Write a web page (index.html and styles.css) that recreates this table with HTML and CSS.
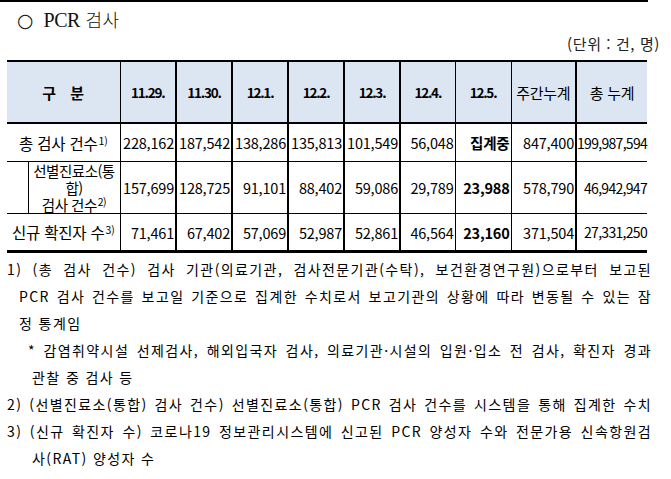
FILE: index.html
```html
<!DOCTYPE html>
<html lang="ko">
<head>
<meta charset="utf-8">
<link rel="stylesheet" href="styles.css">
</head>
<body>
<div class="page">
  <div class="topline"></div>
  <h1 class="title"><span class="circ">○</span><span class="en">PCR</span> <span class="ko">검사</span></h1>
  <div class="unit">(단위 : 건, 명)</div>
  <table class="tbl">
    <colgroup>
      <col class="w-sub"><col class="w-label">
      <col class="w-d"><col class="w-d"><col class="w-d"><col class="w-d"><col class="w-d">
      <col class="w-d5"><col class="w-d">
      <col class="w-wk"><col class="w-tot">
    </colgroup>
    <tr class="hdr">
      <th colspan="2" class="lbl">구 분</th>
      <th class="dt">11.29.</th>
      <th class="dt tk">11.30.</th>
      <th class="dt tk">12.1.</th>
      <th class="dt tk">12.2.</th>
      <th class="dt tk">12.3.</th>
      <th class="dt tk">12.4.</th>
      <th class="dt">12.5.</th>
      <th class="nm">주간누계</th>
      <th class="nm tk">총 누계</th>
    </tr>
    <tr class="r1">
      <td colspan="2" class="lab">총 검사 건수<sup>1)</sup></td>
      <td class="num">228,162</td>
      <td class="num tk">187,542</td>
      <td class="num tk">138,286</td>
      <td class="num tk">135,813</td>
      <td class="num tk">101,549</td>
      <td class="num tk">56,048</td>
      <td class="num b">집계중</td>
      <td class="num">847,400</td>
      <td class="num tk sq">199,987,594</td>
    </tr>
    <tr class="r2">
      <td class="sub"></td>
      <td class="lab ml">선별진료소(통<br>합)<br>검사 건수<sup>2)</sup></td>
      <td class="num">157,699</td>
      <td class="num tk">128,725</td>
      <td class="num tk">91,101</td>
      <td class="num tk">88,402</td>
      <td class="num tk">59,086</td>
      <td class="num tk">29,789</td>
      <td class="num b">23,988</td>
      <td class="num">578,790</td>
      <td class="num tk sq">46,942,947</td>
    </tr>
    <tr class="r3">
      <td colspan="2" class="lab">신규 확진자 수<sup>3)</sup></td>
      <td class="num">71,461</td>
      <td class="num tk">67,402</td>
      <td class="num tk">57,069</td>
      <td class="num tk">52,987</td>
      <td class="num tk">52,861</td>
      <td class="num tk">46,564</td>
      <td class="num b">23,160</td>
      <td class="num">371,504</td>
      <td class="num tk sq">27,331,250</td>
    </tr>
  </table>
  <div class="notes">
    <div class="ln j i0">1) (총 검사 건수) 검사 기관(의료기관, 검사전문기관(수탁), 보건환경연구원)으로부터 보고된</div>
    <div class="ln j i1">PCR 검사 건수를 보고일 기준으로 집계한 수치로서 보고기관의 상황에 따라 변동될 수 있는 잠</div>
    <div class="ln i1">정 통계임</div>
    <div class="ln j i2">* 감염취약시설 선제검사, 해외입국자 검사, 의료기관·시설의 입원·입소 전 검사, 확진자 경과</div>
    <div class="ln i3">관찰 중 검사 등</div>
    <div class="ln j i0">2) (선별진료소(통합) 검사 건수) 선별진료소(통합) PCR 검사 건수를 시스템을 통해 집계한 수치</div>
    <div class="ln j i0">3) (신규 확진자 수) 코로나19 정보관리시스템에 신고된 PCR 양성자 수와 전문가용 신속항원검</div>
    <div class="ln i3">사(RAT) 양성자 수</div>
  </div>
</div>
</body>
</html>
```
FILE: styles.css
```css
html, body {
  margin: 0;
  padding: 0;
  background: #fff;
}
body {
  font-family: "Noto Sans CJK KR", "Noto Sans", sans-serif;
  color: #000;
}
.page {
  width: 671px;
  height: 479px;
  overflow: hidden;
}
.topline {
  width: 648px;
  height: 2px;
  background: #000;
}
.title {
  margin: 0;
  padding-left: 17px;
  height: 34px;
  line-height: 34px;
  font-weight: normal;
  font-size: 20px;
  color: #111;
  white-space: nowrap;
}
.title .circ {
  font-family: "DejaVu Sans", sans-serif;
  font-size: 19px;
  margin-right: 10px;
}
.title .en {
  font-family: "Liberation Serif", serif;
  font-size: 20px;
  letter-spacing: -0.5px;
}
.title .ko {
  font-family: "Noto Sans CJK KR", sans-serif;
  font-weight: 300;
  font-size: 18px;
  letter-spacing: 0.5px;
}
.unit {
  height: 16px;
  line-height: 16px;
  text-align: right;
  padding-right: 11px;
  font-size: 15px;
  letter-spacing: 0.6px;
  color: #222;
}
.tbl {
  margin-top: 8px;
  margin-left: 7px;
  width: 640px;
  table-layout: fixed;
  border-collapse: collapse;
  font-size: 14px;
}
.w-sub { width: 21px; }
.w-label { width: 92px; }
.w-d { width: 56px; }
.w-d5 { width: 55px; }
.w-wk { width: 65px; }
.w-tot { width: 71px; }
.tbl th, .tbl td {
  border: 1px solid #000;
  padding: 0 1px;
  white-space: nowrap;
  overflow: hidden;
}
.tbl tr > :first-child { border-left: none; }
.tbl tr > :last-child { border-right: none; }
.tbl .tk { border-left-width: 2px; }
.hdr th {
  background: #dce6f2;
  border-top: 2px solid #000;
  border-bottom: 2px solid #000;
  height: 60px;
  text-align: center;
  font-size: 14px;
}
.hdr .lbl { letter-spacing: 5px; font-weight: bold; font-size: 15px; padding-left: 6px; }
.hdr .dt { font-weight: bold; letter-spacing: -1.2px; font-size: 13.5px; }
.hdr .nm { font-weight: normal; font-size: 15px; letter-spacing: -0.3px; }
.r1 td { height: 37px; }
.r2 td { height: 51px; }
.r3 td { height: 36px; border-bottom: 3px solid #000; }
.lab {
  text-align: center;
  font-size: 15.5px;
  letter-spacing: -0.2px;
}
.lab.ml {
  font-size: 14.5px;
  letter-spacing: -0.5px;
  line-height: 17px;
  white-space: normal;
  padding: 0;
  overflow: visible;
}
.lab sup {
  font-size: 10.5px;
  vertical-align: 5px;
  line-height: 0;
  margin-left: 1px;
}
.num {
  text-align: right;
  font-size: 14.5px;
  letter-spacing: -0.2px;
}
.num.b { font-weight: bold; }
.num.sq { font-size: 14px; letter-spacing: -0.7px; padding: 0; overflow: visible; }
.notes {
  margin-top: 3px;
  font-size: 14px;
  line-height: 27px;
  letter-spacing: 1.4px;
}
.ln {
  white-space: nowrap;
  padding-right: 19px;
}
.ln.j {
  text-align: justify;
  text-align-last: justify;
}
.i0 { padding-left: 7px; }
.i1 { padding-left: 19px; }
.i2 { padding-left: 28px; }
.i3 { padding-left: 32px; }
```
